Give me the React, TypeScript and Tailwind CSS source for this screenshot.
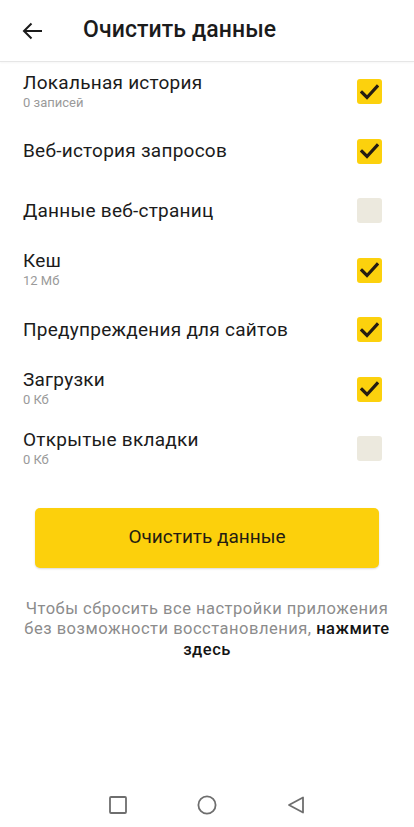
import React from "react";

type Item = { title: string; sub?: string; checked: boolean };

const items: Item[] = [
  { title: "Локальная история", sub: "0 записей", checked: true },
  { title: "Веб-история запросов", checked: true },
  { title: "Данные веб-страниц", checked: false },
  { title: "Кеш", sub: "12 Мб", checked: true },
  { title: "Предупреждения для сайтов", checked: true },
  { title: "Загрузки", sub: "0 Кб", checked: true },
  { title: "Открытые вкладки", sub: "0 Кб", checked: false },
];

function Check({ on }: { on: boolean }) {
  return on ? (
    <div className="w-[25px] h-[25px] rounded-[3px] bg-[#fcd10d] flex items-center justify-center">
      <svg width="19" height="16" viewBox="0 0 19 16" fill="none">
        <path d="M2 8.5 L7 13.5 L17 2.5" stroke="#241c12" strokeWidth="3.2" strokeLinecap="square" />
      </svg>
    </div>
  ) : (
    <div className="w-[25px] h-[25px] rounded-[3px] bg-[#ece9de]" />
  );
}

export default function App() {
  return (
    <div className="w-[414px] h-[827px] bg-white flex flex-col font-['Roboto',sans-serif] text-[#1b1b1b]">
      {/* Header */}
      <div className="h-[62px] flex items-center border-b border-[#e6e6e6] shadow-[0_1px_2px_rgba(0,0,0,0.04)] shrink-0">
        <div className="w-[83px] pl-[22px]">
          <svg width="21" height="18" viewBox="0 0 21 18" fill="none">
            <path d="M20 9 H2.5 M9.5 1.5 L2 9 L9.5 16.5" stroke="#1b1b1b" strokeWidth="2" />
          </svg>
        </div>
        <h1 className="text-[23px] font-medium tracking-[0.1px]">Очистить данные</h1>
      </div>

      {/* Items */}
      <div className="flex flex-col">
        {items.map((it) => (
          <div key={it.title} className="h-[59.5px] flex items-center justify-between pl-[23px] pr-[32px]">
            <div className="flex flex-col">
              <span className="text-[19px] leading-[22px] tracking-[0.25px]">{it.title}</span>
              {it.sub && <span className="text-[13px] leading-[18px] text-[#9a9a9a]">{it.sub}</span>}
            </div>
            <Check on={it.checked} />
          </div>
        ))}
      </div>

      {/* Button */}
      <div className="px-[35px] mt-[29px]">
        <button className="w-full h-[60px] rounded-[5px] bg-[#fcd00c] shadow-[0_1px_2px_rgba(0,0,0,0.15)] text-[19px] text-[#241c12]">
          Очистить данные
        </button>
      </div>

      <p className="mt-[31px] px-[10px] text-center text-[16.5px] leading-[20.5px] tracking-[0.5px] text-[#8c8c8c] whitespace-nowrap">
        Чтобы сбросить все настройки приложения
        <br />
        без возможности восстановления, <span className="text-[#141414] font-medium">нажмите</span>
        <br />
        <span className="text-[#141414] font-medium">здесь</span>
      </p>

      <div className="flex-1" />

      {/* Nav bar */}
      <div className="h-[45px] flex items-center justify-center gap-[70px] shrink-0">
        <svg width="18" height="18" viewBox="0 0 18 18" fill="none">
          <rect x="1" y="1" width="16" height="16" rx="1" stroke="#6e6e6e" strokeWidth="1.8" />
        </svg>
        <svg width="20" height="20" viewBox="0 0 20 20" fill="none">
          <circle cx="10" cy="10" r="8.6" stroke="#6e6e6e" strokeWidth="1.8" />
        </svg>
        <svg width="18" height="18" viewBox="0 0 18 18" fill="none">
          <path d="M16 1.5 V16.5 L2 9 Z" stroke="#6e6e6e" strokeWidth="1.8" strokeLinejoin="round" />
        </svg>
      </div>
    </div>
  );
}
